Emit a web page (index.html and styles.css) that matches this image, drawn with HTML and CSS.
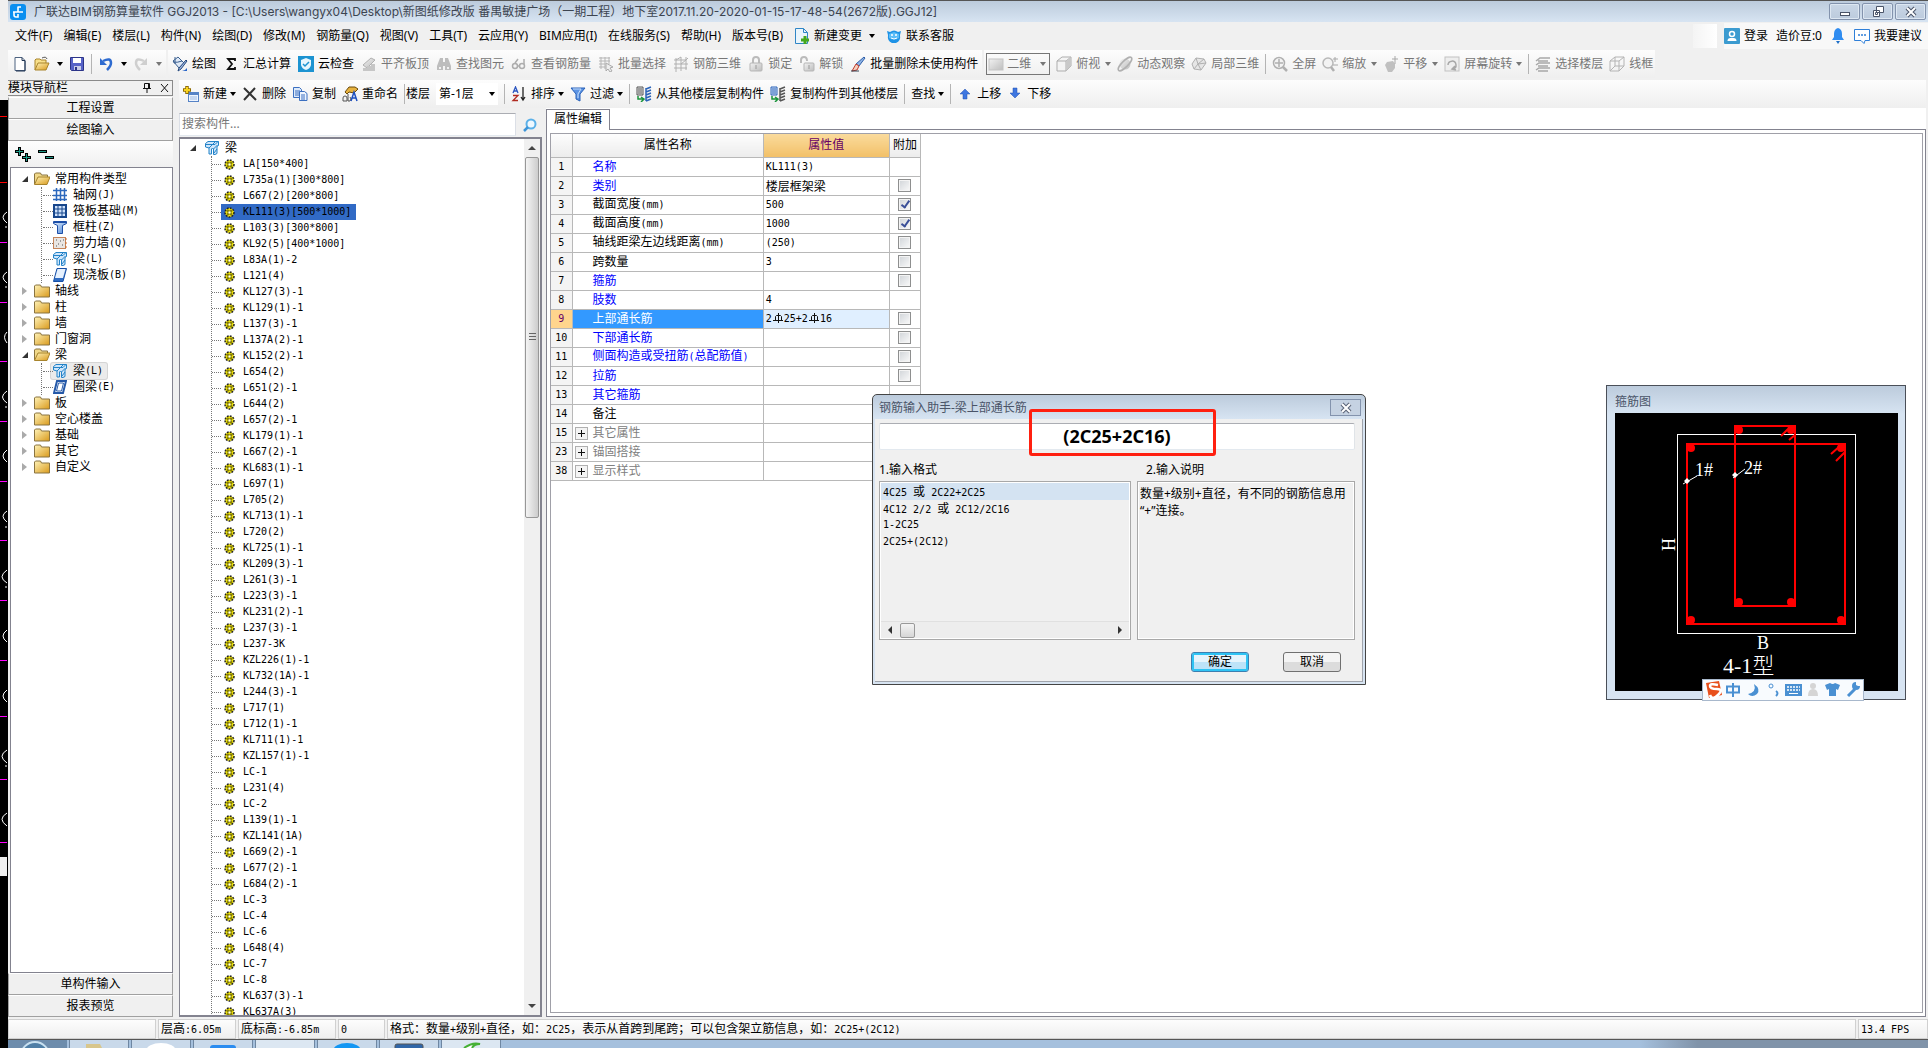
FILE: index.html
```html
<!DOCTYPE html>
<html lang="zh-CN">
<head>
<meta charset="utf-8">
<meta name="viewport" content="width=device-width, initial-scale=1.0">
<title>广联达BIM钢筋算量软件 GGJ2013</title>
<link rel="stylesheet" href="styles.css">
</head>
<body>
<!-- icon sprite -->
<svg class="sprite" aria-hidden="true">
  <defs>
    <linearGradient id="gold" x1="0" y1="0" x2="1" y2="1"><stop offset="0" stop-color="#fff3b8"/><stop offset="1" stop-color="#d99a1c"/></linearGradient>
    <linearGradient id="blue" x1="0" y1="0" x2="1" y2="1"><stop offset="0" stop-color="#e8f2ff"/><stop offset="1" stop-color="#4a86d8"/></linearGradient>
    <linearGradient id="gray" x1="0" y1="0" x2="1" y2="1"><stop offset="0" stop-color="#f2f2f2"/><stop offset="1" stop-color="#bdbdbd"/></linearGradient>
  </defs>
  <symbol id="app" viewBox="0 0 16 16"><rect width="16" height="16" rx="3" fill="#0a8ff0"/><path d="M8 2.500v5.500M8 3h3M3 8h10M4 8v3q0 2 2 2h2V10" fill="none" stroke="#fff" stroke-width="1.600"/></symbol>
  <symbol id="new" viewBox="0 0 16 16"><path d="M3 1.500h7l3 3v10H3z" fill="#fff" stroke="#4c6280"/><path d="M10 1.500v3h3M13 5v10H4" fill="none" stroke="#1f3350"/></symbol>
  <symbol id="open" viewBox="0 0 16 16"><path d="M1 14V4l1-1h4l1 1h5v3" fill="#f8e08a" stroke="#a8842c"/><path d="M1 14l3-7h11l-3 7z" fill="url(#gold)" stroke="#a8842c"/><path d="M8 2q4-2 5 1" fill="none" stroke="#555"/></symbol>
  <symbol id="save" viewBox="0 0 16 16"><path d="M1.500 1.500h13v13h-12l-1-1z" fill="#5763c8" stroke="#2c3488"/><path d="M4 2h8v5H4z" fill="#fff"/><path d="M5 10h7v4H5z" fill="#c9cde8"/><path d="M6 11h2v3H6z" fill="#2c3488"/></symbol>
  <symbol id="undo" viewBox="0 0 16 16"><path d="M5 5q8-4 8 2 0 3-4 7" fill="none" stroke="#2e6bd0" stroke-width="2.500"/><path d="M2 2v7h7z" fill="#2e6bd0"/></symbol>
  <symbol id="redo" viewBox="0 0 16 16"><path d="M11 5Q3 1 3 7q0 3 4 7" fill="none" stroke="#cfcfcf" stroke-width="2.500"/><path d="M14 2v7H7z" fill="#cfcfcf"/></symbol>
  <symbol id="draw" viewBox="0 0 16 16"><path d="M1 5l5-4 6 6-5 5z" fill="#dfe9f6" stroke="#3a5f8f"/><path d="M3 1v7M1 6q4 1 9-1" fill="none" stroke="#3a5f8f"/><path d="M14 4l1 1-6 8-3 2 1-3z" fill="#9fb8df" stroke="#26487c"/><path d="M10 15q3 0 5-3v3z" fill="#2a66c8"/></symbol>
  <symbol id="sigma" viewBox="0 0 16 16"><path d="M12 5V3H5l4 5-4 5h7v-2" fill="none" stroke="#111" stroke-width="1.800"/></symbol>
  <symbol id="cloud" viewBox="0 0 16 16"><rect width="16" height="16" fill="#1c93d1"/><path d="M3 4l5-2 5 2v5q-1 4-5 5-4-1-5-5z" fill="#e8f6fd"/><path d="M5 8l2 2 4-4" fill="none" stroke="#1c93d1" stroke-width="1.500"/></symbol>
  <symbol id="slab" viewBox="0 0 16 16"><path d="M2 9l8-7 4 2-8 8z" fill="url(#gray)" stroke="#b0b0b0"/><path d="M2 12h4v3H2zM6 10h4v5H6zM10 8h4v7h-4z" fill="#c6c6c6"/></symbol>
  <symbol id="binoc" viewBox="0 0 16 16"><path d="M4 2h3v4h2V2h3l3 8v4H9v-4H7v4H1v-4z" fill="#bdbdbd"/><path d="M3 11h2v2H3zM11 11h2v2h-2z" fill="#f1f1f1"/></symbol>
  <symbol id="glasses" viewBox="0 0 16 16"><g fill="none" stroke="#adadad" stroke-width="1.500"><circle cx="4" cy="10" r="2.500"/><circle cx="11" cy="10" r="2.500"/><path d="M6.500 10h2M4 7l3-4M13 8V3"/></g></symbol>
  <symbol id="batch" viewBox="0 0 16 16"><path d="M1 2h11M1 5h11M1 8h6M3 1v12M7 1v12M11 1v7M1 11h6" stroke="#b5b5b5" fill="none"/><path d="M8 7l7 4-3 1 2 3-2 1-2-3-2 2z" fill="#eee" stroke="#aaa"/></symbol>
  <symbol id="grid3" viewBox="0 0 16 16"><path d="M1 4h12l2-2M1 8h14M1 12h13M3 2v14M8 1v14M13 1v13M3 4l5-3M8 8l5-4" stroke="#b0b0b0" fill="none"/></symbol>
  <symbol id="lock" viewBox="0 0 16 16"><path d="M5 7V4q0-3 3-3t3 3v3" fill="none" stroke="#bbb" stroke-width="2"/><rect x="2" y="7" width="12" height="8" rx="1" fill="url(#gray)" stroke="#b5b5b5"/><path d="M8 9v4" stroke="#999"/></symbol>
  <symbol id="unlock" viewBox="0 0 16 16"><path d="M2 7V4q0-3 3-3t3 4" fill="none" stroke="#bbb" stroke-width="2"/><rect x="5" y="7" width="10" height="8" rx="1" fill="url(#gray)" stroke="#b5b5b5"/><path d="M10 9v4" stroke="#999"/></symbol>
  <symbol id="brush" viewBox="0 0 16 16"><path d="M14 1l1 1-6 8-3-2z" fill="#8eb4e6" stroke="#2f5fa8"/><path d="M6 8l3 2-2 4-5 1z" fill="#f3d0c0" stroke="#c0392b"/><path d="M1 15h8" stroke="#345"/></symbol>
  <symbol id="flat" viewBox="0 0 16 16"><rect x="1" y="3" width="14" height="11" fill="url(#gray)" stroke="#c4c4c4"/></symbol>
  <symbol id="cube" viewBox="0 0 16 16"><path d="M1 5l5-4h9v9l-5 5H1z" fill="#f4f4f4" stroke="#adadad"/><path d="M1 5h9v10M10 5l5-4" fill="none" stroke="#adadad"/><path d="M10 5l5-4v9l-5 5z" fill="#c9c9c9"/></symbol>
  <symbol id="orbit" viewBox="0 0 16 16"><circle cx="8" cy="8" r="5.500" fill="url(#gray)"/><ellipse cx="8" cy="8" rx="9" ry="3" transform="rotate(-45 8 8)" fill="none" stroke="#b0b0b0" stroke-width="1.500"/></symbol>
  <symbol id="part3" viewBox="0 0 16 16"><path d="M1 8l4-6 8 1 2 4-5 7-7-1z" fill="#e6e6e6" stroke="#b0b0b0"/><path d="M5 2l2 6-4 5M7 8l8-1M7 8l3 6M13 3L7 8" fill="none" stroke="#b0b0b0"/></symbol>
  <symbol id="full" viewBox="0 0 16 16"><circle cx="7" cy="7" r="5.500" fill="#f3f3f3" stroke="#b0b0b0" stroke-width="1.500"/><path d="M7 3v8M3 7h8" stroke="#b0b0b0" stroke-width="1.500"/><path d="M11 11l4 4" stroke="#b0b0b0" stroke-width="2.500"/></symbol>
  <symbol id="zoom" viewBox="0 0 16 16"><circle cx="6" cy="7" r="5" fill="#f3f3f3" stroke="#b8b8b8" stroke-width="1.500"/><path d="M9 11l3 4" stroke="#b0b0b0" stroke-width="2.500"/><path d="M13 1v5M11 3h5M11 9h5" stroke="#a8a8a8"/></symbol>
  <symbol id="pan" viewBox="0 0 16 16"><path d="M2 9l2-3 6-1 2 3v4l-3 4H5z" fill="#c0c0c0"/><path d="M12 0v8M9 3h6" stroke="#a8a8a8"/></symbol>
  <symbol id="rotate" viewBox="0 0 16 16"><rect x="1" y="1" width="14" height="14" fill="#eee" stroke="#c2c2c2"/><path d="M4 9a4 4 0 1 1 5 4M12 14l-4-1 3-3" fill="none" stroke="#a8a8a8" stroke-width="1.500"/></symbol>
  <symbol id="floors" viewBox="0 0 16 16"><path d="M1 5l4-3h10M3 5h10M1 9l3-2h11M3 10h10M1 14l3-2h11M3 15h10" fill="none" stroke="#a8a8a8" stroke-width="1.500"/></symbol>
  <symbol id="wire" viewBox="0 0 16 16"><path d="M1 5l5-4h9v9l-5 5H1zM1 5h9v10M10 5l5-4M6 1v9h9M6 10l-5 5" fill="none" stroke="#b4b4b4"/></symbol>
  <symbol id="docplus" viewBox="0 0 16 16"><path d="M1.500.500h8l4 4v11h-12z" fill="#eaf5fc" stroke="#2f86c6"/><path d="M9.500.500v4h4" fill="none" stroke="#2f86c6"/><path d="M11 8v8M7 12h8" stroke="#45a81c" stroke-width="3"/></symbol>
  <symbol id="robot" viewBox="0 0 16 16"><path d="M1 3l3 1q4-3 8 0l3-1-1 4q1 6-4 8H6Q1 13 2 7z" fill="#1f93e6"/><path d="M3 6l5-2 5 2v4q-5 3-10 0z" fill="#5bbcf7"/><circle cx="6" cy="7" r="1" fill="#fff"/><circle cx="10" cy="7" r="1" fill="#fff"/><path d="M5 10q3 2 6 0" stroke="#fff" fill="none"/></symbol>
  <symbol id="user" viewBox="0 0 16 16"><rect width="16" height="16" rx="1" fill="#3b9bd0"/><circle cx="8" cy="6" r="2.500" fill="none" stroke="#fff" stroke-width="1.500"/><path d="M3.500 13q0-3 3-3h3q3 0 3 3z" fill="#fff"/></symbol>
  <symbol id="bell" viewBox="0 0 16 16"><path d="M8 0q-4 1-4 6v3l-2 3h12l-2-3V6q0-5-4-6z" fill="#2f8cf0"/><path d="M6 13h4l-2 3z" fill="#1d6fc8"/></symbol>
  <symbol id="chat" viewBox="0 0 16 16"><path d="M.500 1.500h15v11H11l-1 3-3-3H.500z" fill="#fff" stroke="#2f7fd8"/><path d="M4 7h2M7 7h2M10 7h2" stroke="#2f7fd8" stroke-width="1.500"/></symbol>
  <symbol id="newitem" viewBox="0 0 16 16"><rect x="5.500" y="6.500" width="10" height="9" fill="#eef5ff" stroke="#5683c6"/><path d="M6 8h9" stroke="#5683c6" stroke-width="2"/><path d="M7 11h7M7 13h7" stroke="#9db9e2"/><path d="M4 0v8M0 4h8" stroke="#8f6b00" stroke-width="3.500"/><path d="M4 1v6M1 4h6" stroke="#f7d21e" stroke-width="2"/></symbol>
  <symbol id="cross" viewBox="0 0 16 16"><path d="M2 2l12 12M13 2L2 14" stroke="#333" stroke-width="2" fill="none"/></symbol>
  <symbol id="copy" viewBox="0 0 16 16"><path d="M1.500 1.500h6l2 2v8h-8z" fill="#dce9fa" stroke="#3b6fc0"/><path d="M3 5h5M3 7h5M3 9h5" stroke="#3b6fc0"/><path d="M7.500 5.500h5l2.500 2v7H7.500z" fill="#eef5ff" stroke="#3b6fc0"/><path d="M9 9h4M9 11h4M9 13h4" stroke="#3b6fc0"/></symbol>
  <symbol id="rename" viewBox="0 0 16 16"><path d="M3 6l4-5h6l3 2-4 4-5-1-2 2z" fill="#e7b23d" stroke="#6b4a0c"/><path d="M1 15v-3q0-2 2-2t2 2v3zM6 8v7h2q2-2 0-4" fill="none" stroke="#555"/><path d="M9 15l3-9 3 9M10 12h4" fill="none" stroke="#1c4fc0" stroke-width="1.500"/></symbol>
  <symbol id="sort" viewBox="0 0 16 16"><path d="M2 7l2.500-6L7 7M3 5h3" fill="none" stroke="#2a55c0" stroke-width="1.300"/><path d="M2 9.500h5l-5 5h5" fill="none" stroke="#b02a20" stroke-width="1.300"/><path d="M12 1v12M10 11l2 3 2-3" fill="none" stroke="#222" stroke-width="1.300"/></symbol>
  <symbol id="filter" viewBox="0 0 16 16"><path d="M1 2h14L10 8v7l-4-2V8z" fill="#5c94e4" stroke="#2860b8"/><path d="M3 3h8L8 8v4" fill="none" stroke="#c4dcfa"/></symbol>
  <symbol id="fromfloor" viewBox="0 0 16 16"><path d="M1 1h6v8H1z" fill="#e8e8e8" stroke="#555"/><path d="M2 3h4M2 5h4M2 7h4" stroke="#555"/><path d="M2 10v3h5M5 11l3 2-3 3" fill="none" stroke="#19943a" stroke-width="1.500"/><path d="M10 3l5-2M10 6l5-2M10 9l5-2M10 12l5-2M10 15l5-2M10 2v13" stroke="#2a63b8" stroke-width="1.500"/></symbol>
  <symbol id="tofloor" viewBox="0 0 16 16"><path d="M1 1h6v8H1z" fill="#cfe0f8" stroke="#2a63b8"/><path d="M2 3h4M2 5h4M2 7h4" stroke="#2a63b8"/><path d="M2 10v3h5M5 11l3 2-3 3" fill="none" stroke="#19943a" stroke-width="1.500"/><path d="M10 3l5-2M10 6l5-2M10 9l5-2M10 12l5-2M10 15l5-2M10 2v13" stroke="#555" stroke-width="1.500"/></symbol>
  <symbol id="up" viewBox="0 0 16 16"><path d="M8 3l5 5h-3v5H6V8H3z" fill="#3e76e0" stroke="#2250b0" stroke-width=".500"/></symbol>
  <symbol id="down" viewBox="0 0 16 16"><path d="M8 12l5-5h-3V2H6v5H3z" fill="#3e76e0" stroke="#2250b0" stroke-width=".500"/></symbol>
  <symbol id="mag" viewBox="0 0 16 16"><circle cx="9" cy="7" r="4.500" fill="#eef8ff" stroke="#5bb0e8" stroke-width="2"/><path d="M6 10l-4 4" stroke="#3d95d8" stroke-width="2.500"/></symbol>
  <symbol id="folder" viewBox="0 0 16 14"><path d="M.500 12V2l1-1h5l1 2h8v10H.500z" fill="url(#gold)" stroke="#8a7440"/></symbol>
  <symbol id="folder-open" viewBox="0 0 16 14"><path d="M.500 12V2l1-1h5l1 2h6v2" fill="#f1d98a" stroke="#8a7440"/><path d="M.500 12.500L4 5h12l-3 7.500z" fill="url(#gold)" stroke="#a8842c"/></symbol>
  <symbol id="axis" viewBox="0 0 14 14"><path d="M0 2.500h14M0 7.500h14M0 11.500h14M3.500 0v13M7.500 0v13M11.500 0v13" stroke="#2c68bd" fill="none" stroke-width="1.500"/></symbol>
  <symbol id="raft" viewBox="0 0 14 14"><path d="M1 1h12v12H1z" fill="#cfe2fb" stroke="#17468c" stroke-width="2"/><path d="M1 5h12M1 9h12M5 1v12M9 1v12" stroke="#17468c"/></symbol>
  <symbol id="column" viewBox="0 0 14 14"><path d="M.500 1.500h13v2l-4 2v8h-5v-8l-4-2z" fill="url(#blue)" stroke="#1d4fa8"/><path d="M1 2h12" stroke="#1d4fa8" stroke-width="2"/></symbol>
  <symbol id="wall" viewBox="0 0 14 14"><rect x=".500" y="1.500" width="12" height="11" fill="#e9e6e3" stroke="#c4855b"/><path d="M3 4h1M7 5h1M5 8h1M9 9h1M3 10h1M10 4h1" stroke="#555"/><path d="M12 3h2M12 7h2M12 11h2" stroke="#d06a2b"/></symbol>
  <symbol id="beam" viewBox="0 0 14 14"><path d="M.500 2.500L3 .500h10.500v4l-1.500 1v7l-2 1H8.500V8l-1-1-1 1v5H4V7L.500 6z" fill="#cfe6fb" stroke="#2383c8"/><path d="M1 3.500h9l3-3M4 7l6-6M8.500 8l4-4M9 12l3-4" fill="none" stroke="#2383c8"/></symbol>
  <symbol id="plate" viewBox="0 0 14 14"><path d="M4 .500h9.500L10 13.500H.500z" fill="#2f6cc4" stroke="#174fa5"/><path d="M4.500 1h8l-2.500 9H2z" fill="#e6f1fe"/></symbol>
  <symbol id="ring" viewBox="0 0 14 14"><path d="M4 1h9l-3 12H1z" fill="#fff" stroke="#2458a8" stroke-width="2"/><path d="M5.500 3h5l-2 8h-5z" fill="#fff" stroke="#2458a8"/></symbol>
  <symbol id="gear" viewBox="0 0 11 11"><circle cx="5.500" cy="5.500" r="4.500" fill="#f4e80c" stroke="#222" stroke-width="1.500" stroke-dasharray="1.800 1.200"/><path d="M4 2.500v6M7 2.500v6M2.500 4h6M2.500 7h6" stroke="#3a3800" stroke-width=".700"/><rect x="4.500" y="4.500" width="2" height="2" fill="#fff"/></symbol>
  <symbol id="rebar" viewBox="0 0 10 11"><path d="M5.500 0v10M2.500 7.500v-4l1-1h4l1 1v4M0 7.500h10" fill="none" stroke="#111"/></symbol>
</svg>

<div class="strip" aria-hidden="true">
  <svg width="8" height="948" viewBox="0 0 8 948">
    <rect width="8" height="948" fill="#000"/>
    <path d="M0 16.500h7M0 82.500h7" stroke="#f00"/>
    <path d="M0 142.500h7M0 202.500h7M0 261.500h7M0 321.500h7M0 381.500h7M0 440.500h7M0 500.500h7M0 560.500h7M0 616.500h7M0 679.500h7M0 742.500h7" stroke="#f0f"/>
    <path d="M7 112q-8 5 0 11M7 172q-8 5 0 11M7 232q-5 5 0 11M7 291q-9 6 0 12M7 350q-8 6 0 12M7 411q-8 5 0 11M7 470q-10 7 0 13M7 530q-8 6 0 12M7 590q-8 6 0 12M7 650q-10 6 0 13M7 713q-10 6 0 13M5 127h2M5 187h2M5 307h2M5 427h2M5 487h2M5 666h2" fill="none" stroke="#fff"/>
    <path d="M0 757h7v19H0z" fill="#f0f0f0"/>
  </svg>
</div>

<div class="app">
  <header class="titlebar">
    <svg class="icon"><use href="#app"/></svg>
    <h1>广联达BIM钢筋算量软件 GGJ2013 - [C:\Users\wangyx04\Desktop\新图纸修改版 番禺敏捷广场（一期工程）地下室2017.11.20-2020-01-15-17-48-54(2672版).GGJ12]</h1>
    <div class="winbtns">
      <button aria-label="最小化"><svg width="14" height="14"><rect x="2.500" y="7.500" width="9" height="3" fill="#fff" stroke="#4a5468"/></svg></button>
      <button aria-label="还原"><svg width="14" height="14"><path d="M5.500 1.500h7v6h-7zM2.500 5.500h6v6h-6z" fill="#fff" stroke="#4a5468"/><path d="M4.500 7.500h2v2h-2z" fill="#fff" stroke="#4a5468"/></svg></button>
      <button aria-label="关闭"><svg width="14" height="14"><path d="M3 3l8 8M11 3l-8 8" stroke="#4a5468" stroke-width="4"/><path d="M3 3l8 8M11 3l-8 8" stroke="#fff" stroke-width="2"/></svg></button>
    </div>
  </header>

  <nav class="menubar">
    <button>文件(F)</button><button>编辑(E)</button><button>楼层(L)</button><button>构件(N)</button><button>绘图(D)</button><button>修改(M)</button><button>钢筋量(Q)</button><button>视图(V)</button><button>工具(T)</button><button>云应用(Y)</button><button>BIM应用(I)</button><button>在线服务(S)</button><button>帮助(H)</button><button>版本号(B)</button>
    <button class="tool"><svg class="icon"><use href="#docplus"/></svg>新建变更<i class="caret far"></i></button>
    <button class="tool"><svg class="icon"><use href="#robot"/></svg>联系客服</button>
    <span class="blank"></span>
    <div class="account">
      <button class="tool"><svg class="icon"><use href="#user"/></svg>登录</button>
      <button>造价豆:0</button>
      <button class="tool" aria-label="消息"><svg class="icon"><use href="#bell"/></svg></button>
      <button class="tool"><svg class="icon"><use href="#chat"/></svg>我要建议</button>
    </div>
  </nav>

  <div class="toolrow">
    <div class="toolbar files">
      <button aria-label="新建"><svg class="icon"><use href="#new"/></svg></button>
      <button class="tool" aria-label="打开"><svg class="icon"><use href="#open"/></svg><i class="caret far"></i></button>
      <button aria-label="保存"><svg class="icon"><use href="#save"/></svg></button>
      <i class="sep"></i>
      <button class="tool" aria-label="撤销"><svg class="icon"><use href="#undo"/></svg><i class="caret far"></i></button>
      <button class="tool dim" aria-label="恢复"><svg class="icon"><use href="#redo"/></svg><i class="caret far"></i></button>
    </div>
    <div class="toolbar">
      <button class="tool"><svg class="icon"><use href="#draw"/></svg>绘图</button>
      <button class="tool"><svg class="icon"><use href="#sigma"/></svg>汇总计算</button>
      <button class="tool"><svg class="icon"><use href="#cloud"/></svg>云检查</button>
      <button class="tool dim"><svg class="icon"><use href="#slab"/></svg>平齐板顶</button>
      <button class="tool dim"><svg class="icon"><use href="#binoc"/></svg>查找图元</button>
      <button class="tool dim"><svg class="icon"><use href="#glasses"/></svg>查看钢筋量</button>
      <button class="tool dim"><svg class="icon"><use href="#batch"/></svg>批量选择</button>
      <button class="tool dim"><svg class="icon"><use href="#grid3"/></svg>钢筋三维</button>
      <button class="tool dim"><svg class="icon"><use href="#lock"/></svg>锁定</button>
      <button class="tool dim"><svg class="icon"><use href="#unlock"/></svg>解锁</button>
      <button class="tool"><svg class="icon"><use href="#brush"/></svg>批量删除未使用构件</button>
    </div>
    <div class="toolbar view">
      <label class="drop framed dim"><svg class="icon"><use href="#flat"/></svg><select aria-label="视图模式"><option>二维</option><option>三维</option></select><i class="caret"></i></label>
      <button class="tool dim"><svg class="icon"><use href="#cube"/></svg>俯视<i class="caret far"></i></button>
      <button class="tool dim"><svg class="icon"><use href="#orbit"/></svg>动态观察</button>
      <button class="tool dim"><svg class="icon"><use href="#part3"/></svg>局部三维</button>
      <i class="sep"></i>
      <button class="tool dim"><svg class="icon"><use href="#full"/></svg>全屏</button>
      <button class="tool dim"><svg class="icon"><use href="#zoom"/></svg>缩放<i class="caret far"></i></button>
      <button class="tool dim"><svg class="icon"><use href="#pan"/></svg>平移<i class="caret far"></i></button>
      <button class="tool dim"><svg class="icon"><use href="#rotate"/></svg>屏幕旋转<i class="caret"></i></button>
      <i class="sep"></i>
      <button class="tool dim"><svg class="icon"><use href="#floors"/></svg>选择楼层</button>
      <button class="tool dim"><svg class="icon"><use href="#wire"/></svg>线框</button>
    </div>
  </div>

  <main class="main">
    <aside class="nav">
      <div class="nav-head">模块导航栏
        <span class="nav-ctl">
          <button aria-label="固定"><svg width="10" height="12"><path d="M2.500 1.500h5v5h-5zM6.500 1v6M1 6.500h8M5 7v4" fill="none" stroke="#111"/></svg></button>
          <button aria-label="关闭"><svg width="9" height="12"><path d="M1 2l7 8M8 2L1 10" stroke="#111" fill="none"/></svg></button>
        </span>
      </div>
      <button class="bar">工程设置</button>
      <button class="bar">绘图输入</button>
      <div class="nav-tools">
        <button aria-label="全部展开"><svg width="17" height="15"><path d="M4.500 0v9M0 4.500h9M11.500 6v9M7 10.500h9" stroke="#000" stroke-width="3"/><path d="M4.500 1v7M1 4.500h7M11.500 7v7M8 10.500h7" stroke="#1f9a88"/></svg></button>
        <button aria-label="全部折叠"><svg width="17" height="15"><path d="M0 4.500h9M7 10.500h9" stroke="#000" stroke-width="3"/><path d="M1 4.500h7M8 10.500h7" stroke="#1f9a88"/></svg></button>
      </div>
      <ul class="tree">
        <li class="open"><span><svg class="fold"><use href="#folder-open"/></svg>常用构件类型</span>
          <ul>
            <li><span><svg><use href="#axis"/></svg>轴网<b>(J)</b></span></li>
            <li><span><svg><use href="#raft"/></svg>筏板基础<b>(M)</b></span></li>
            <li><span><svg><use href="#column"/></svg>框柱<b>(Z)</b></span></li>
            <li><span><svg><use href="#wall"/></svg>剪力墙<b>(Q)</b></span></li>
            <li><span><svg><use href="#beam"/></svg>梁<b>(L)</b></span></li>
            <li><span><svg><use href="#plate"/></svg>现浇板<b>(B)</b></span></li>
          </ul>
        </li>
        <li><span><svg class="fold"><use href="#folder"/></svg>轴线</span></li>
        <li><span><svg class="fold"><use href="#folder"/></svg>柱</span></li>
        <li><span><svg class="fold"><use href="#folder"/></svg>墙</span></li>
        <li><span><svg class="fold"><use href="#folder"/></svg>门窗洞</span></li>
        <li class="open"><span><svg class="fold"><use href="#folder-open"/></svg>梁</span>
          <ul>
            <li class="current"><span><svg><use href="#beam"/></svg>梁<b>(L)</b></span></li>
            <li><span><svg><use href="#ring"/></svg>圈梁<b>(E)</b></span></li>
          </ul>
        </li>
        <li><span><svg class="fold"><use href="#folder"/></svg>板</span></li>
        <li><span><svg class="fold"><use href="#folder"/></svg>空心楼盖</span></li>
        <li><span><svg class="fold"><use href="#folder"/></svg>基础</span></li>
        <li><span><svg class="fold"><use href="#folder"/></svg>其它</span></li>
        <li><span><svg class="fold"><use href="#folder"/></svg>自定义</span></li>
      </ul>
      <button class="bar">单构件输入</button>
      <button class="bar">报表预览</button>
    </aside>

    <div class="work">
      <div class="toolbar second">
        <button class="tool"><svg class="icon"><use href="#newitem"/></svg>新建<i class="caret"></i></button>
        <button class="tool"><svg class="icon"><use href="#cross"/></svg>删除</button>
        <button class="tool"><svg class="icon"><use href="#copy"/></svg>复制</button>
        <button class="tool"><svg class="icon"><use href="#rename"/></svg>重命名</button>
        <i class="sep"></i>
        <label class="floor" for="floor">楼层</label>
        <span class="drop"><select id="floor"><option>第-1层</option><option>首层</option></select><i class="caret"></i></span>
        <i class="sep"></i>
        <button class="tool"><svg class="icon"><use href="#sort"/></svg>排序<i class="caret"></i></button>
        <button class="tool"><svg class="icon"><use href="#filter"/></svg>过滤<i class="caret"></i></button>
        <i class="sep"></i>
        <button class="tool"><svg class="icon"><use href="#fromfloor"/></svg>从其他楼层复制构件</button>
        <button class="tool"><svg class="icon"><use href="#tofloor"/></svg>复制构件到其他楼层</button>
        <i class="sep"></i>
        <button class="tool">查找<i class="caret"></i></button>
        <i class="sep"></i>
        <button class="tool"><svg class="icon"><use href="#up"/></svg>上移</button>
        <button class="tool"><svg class="icon"><use href="#down"/></svg>下移</button>
      </div>

      <div class="panes">
        <section class="parts">
          <div class="search">
            <input type="text" placeholder="搜索构件..." aria-label="搜索构件">
            <button aria-label="搜索"><svg class="icon"><use href="#mag"/></svg></button>
          </div>
          <div class="list">
            <div class="list-body">
              <div class="root"><svg><use href="#beam"/></svg>梁</div>
              <ul>
                <li><svg><use href="#gear"/></svg>LA[150*400]</li>
                <li><svg><use href="#gear"/></svg>L735a(1)[300*800]</li>
                <li><svg><use href="#gear"/></svg>L667(2)[200*800]</li>
                <li class="sel"><svg><use href="#gear"/></svg>KL111(3)[500*1000]</li>
                <li><svg><use href="#gear"/></svg>L103(3)[300*800]</li>
                <li><svg><use href="#gear"/></svg>KL92(5)[400*1000]</li>
                <li><svg><use href="#gear"/></svg>L83A(1)-2</li>
                <li><svg><use href="#gear"/></svg>L121(4)</li>
                <li><svg><use href="#gear"/></svg>KL127(3)-1</li>
                <li><svg><use href="#gear"/></svg>KL129(1)-1</li>
                <li><svg><use href="#gear"/></svg>L137(3)-1</li>
                <li><svg><use href="#gear"/></svg>L137A(2)-1</li>
                <li><svg><use href="#gear"/></svg>KL152(2)-1</li>
                <li><svg><use href="#gear"/></svg>L654(2)</li>
                <li><svg><use href="#gear"/></svg>L651(2)-1</li>
                <li><svg><use href="#gear"/></svg>L644(2)</li>
                <li><svg><use href="#gear"/></svg>L657(2)-1</li>
                <li><svg><use href="#gear"/></svg>KL179(1)-1</li>
                <li><svg><use href="#gear"/></svg>L667(2)-1</li>
                <li><svg><use href="#gear"/></svg>KL683(1)-1</li>
                <li><svg><use href="#gear"/></svg>L697(1)</li>
                <li><svg><use href="#gear"/></svg>L705(2)</li>
                <li><svg><use href="#gear"/></svg>KL713(1)-1</li>
                <li><svg><use href="#gear"/></svg>L720(2)</li>
                <li><svg><use href="#gear"/></svg>KL725(1)-1</li>
                <li><svg><use href="#gear"/></svg>KL209(3)-1</li>
                <li><svg><use href="#gear"/></svg>L261(3)-1</li>
                <li><svg><use href="#gear"/></svg>L223(3)-1</li>
                <li><svg><use href="#gear"/></svg>KL231(2)-1</li>
                <li><svg><use href="#gear"/></svg>L237(3)-1</li>
                <li><svg><use href="#gear"/></svg>L237-3K</li>
                <li><svg><use href="#gear"/></svg>KZL226(1)-1</li>
                <li><svg><use href="#gear"/></svg>KL732(1A)-1</li>
                <li><svg><use href="#gear"/></svg>L244(3)-1</li>
                <li><svg><use href="#gear"/></svg>L717(1)</li>
                <li><svg><use href="#gear"/></svg>L712(1)-1</li>
                <li><svg><use href="#gear"/></svg>KL711(1)-1</li>
                <li><svg><use href="#gear"/></svg>KZL157(1)-1</li>
                <li><svg><use href="#gear"/></svg>LC-1</li>
                <li><svg><use href="#gear"/></svg>L231(4)</li>
                <li><svg><use href="#gear"/></svg>LC-2</li>
                <li><svg><use href="#gear"/></svg>L139(1)-1</li>
                <li><svg><use href="#gear"/></svg>KZL141(1A)</li>
                <li><svg><use href="#gear"/></svg>L669(2)-1</li>
                <li><svg><use href="#gear"/></svg>L677(2)-1</li>
                <li><svg><use href="#gear"/></svg>L684(2)-1</li>
                <li><svg><use href="#gear"/></svg>LC-3</li>
                <li><svg><use href="#gear"/></svg>LC-4</li>
                <li><svg><use href="#gear"/></svg>LC-6</li>
                <li><svg><use href="#gear"/></svg>L648(4)</li>
                <li><svg><use href="#gear"/></svg>LC-7</li>
                <li><svg><use href="#gear"/></svg>LC-8</li>
                <li><svg><use href="#gear"/></svg>KL637(3)-1</li>
                <li><svg><use href="#gear"/></svg>KL637A(3)</li>
              </ul>
            </div>
            <div class="vscroll"><i class="tri up"></i><div class="track"><div class="thumb"></div></div><i class="tri down"></i></div>
          </div>
        </section>

        <section class="props">
          <div class="tabs"><button class="tab">属性编辑</button></div>
          <div class="sheet">
            <div class="inner">
              <table>
                <colgroup><col class="c-no"><col class="c-name"><col class="c-val"><col class="c-add"></colgroup>
                <thead><tr><th></th><th>属性名称</th><th class="hot">属性值</th><th>附加</th></tr></thead>
                <tbody>
                  <tr><th>1</th><td class="blue">名称</td><td class="val">KL111(3)</td><td></td></tr>
                  <tr><th>2</th><td class="blue">类别</td><td class="val cn">楼层框架梁</td><td><input type="checkbox" aria-label="类别"></td></tr>
                  <tr><th>3</th><td>截面宽度<b>(mm)</b></td><td class="val">500</td><td><input type="checkbox" aria-label="截面宽度" checked></td></tr>
                  <tr><th>4</th><td>截面高度<b>(mm)</b></td><td class="val">1000</td><td><input type="checkbox" aria-label="截面高度" checked></td></tr>
                  <tr><th>5</th><td>轴线距梁左边线距离<b>(mm)</b></td><td class="val">(250)</td><td><input type="checkbox" aria-label="轴线距梁左边线距离"></td></tr>
                  <tr><th>6</th><td>跨数量</td><td class="val">3</td><td><input type="checkbox" aria-label="跨数量"></td></tr>
                  <tr><th>7</th><td class="blue">箍筋</td><td class="val"></td><td><input type="checkbox" aria-label="箍筋"></td></tr>
                  <tr><th>8</th><td class="blue">肢数</td><td class="val">4</td><td></td></tr>
                  <tr class="active"><th>9</th><td>上部通长筋</td><td class="val">2<svg class="rebar"><use href="#rebar"/></svg>25+2<svg class="rebar"><use href="#rebar"/></svg>16</td><td><input type="checkbox" aria-label="上部通长筋"></td></tr>
                  <tr><th>10</th><td class="blue">下部通长筋</td><td class="val"></td><td><input type="checkbox" aria-label="下部通长筋"></td></tr>
                  <tr><th>11</th><td class="blue">侧面构造或受扭筋<b>(</b>总配筋值<b>)</b></td><td class="val"></td><td><input type="checkbox" aria-label="侧面构造或受扭筋"></td></tr>
                  <tr><th>12</th><td class="blue">拉筋</td><td class="val"></td><td><input type="checkbox" aria-label="拉筋"></td></tr>
                  <tr><th>13</th><td class="blue">其它箍筋</td><td class="val"></td><td></td></tr>
                  <tr><th>14</th><td>备注</td><td class="val"></td><td></td></tr>
                  <tr><th>15</th><td class="group"><button aria-label="展开"></button>其它属性</td><td class="val"></td><td></td></tr>
                  <tr><th>23</th><td class="group"><button aria-label="展开"></button>锚固搭接</td><td class="val"></td><td></td></tr>
                  <tr><th>38</th><td class="group"><button aria-label="展开"></button>显示样式</td><td class="val"></td><td></td></tr>
                </tbody>
              </table>
            </div>
          </div>
        </section>
      </div>
    </div>
  </main>

  <footer class="status">
    <span class="s1"></span><span class="s2">层高<b>:6.05m</b></span><span class="s3">底标高<b>:-6.85m</b></span><span class="s4"><b>0</b></span>
    <span class="s5">格式：数量<b>+</b>级别<b>+</b>直径，如：<b>2C25</b>，表示从首跨到尾跨；可以包含架立筋信息，如：<b>2C25+(2C12)</b></span>
    <span class="s6"><b>13.4 FPS</b></span>
  </footer>
  <div class="taskbar">
    <span class="start"><svg width="30" height="8"><circle cx="15" cy="16" r="14" fill="#4f7ea6" stroke="#c8e0f0" stroke-width="2"/></svg></span>
    <span class="task"><svg width="30" height="8"><path d="M2 8V4h14l2 4z" fill="#d8c68c"/></svg></span>
    <span class="task"><svg width="30" height="8"><ellipse cx="15" cy="11" rx="15" ry="8" fill="#fff"/></svg></span>
    <span class="task"><svg width="30" height="8"><rect x="2" y="5" width="26" height="9" rx="3" fill="#2a8cf0"/></svg></span>
    <span class="task light"></span>
    <span class="task"><svg width="30" height="8"><ellipse cx="15" cy="11" rx="14" ry="8" fill="#1296f3"/></svg></span>
    <span class="task"><svg width="30" height="8"><rect x="1" y="4" width="28" height="9" rx="2" fill="#2f66a8" stroke="#555"/></svg></span>
    <span class="task light"><svg width="30" height="8"><path d="M8 8q8-6 16-4-6 0-8 4" fill="#fff" stroke="#45b035" stroke-width="2"/></svg></span>
  </div>
</div>

<!-- floating windows -->
<div class="dialog" role="dialog" aria-labelledby="dlg-title">
  <div class="dlg-title"><span id="dlg-title">钢筋输入助手-梁上部通长筋</span>
    <button aria-label="关闭"><svg width="14" height="12"><path d="M3 2l8 8M11 2l-8 8" stroke="#5a6478" stroke-width="4"/><path d="M3 2l8 8M11 2l-8 8" stroke="#fff" stroke-width="2"/></svg></button>
  </div>
  <div class="dlg-body">
    <input class="formula" type="text" value="(2C25+2C16)" aria-label="钢筋信息">
    <div class="cols">
      <div class="col-l">
        <h2>1.输入格式</h2>
        <div class="box formats">
          <ul><li class="on">4C25 <i>或</i> 2C22+2C25</li><li>4C12 2/2 <i>或</i> 2C12/2C16</li><li>1-2C25</li><li>2C25+(2C12)</li></ul>
          <div class="hscroll"><i class="tri left"></i><div class="knob"></div><i class="tri right"></i></div>
        </div>
      </div>
      <div class="col-r">
        <h2>2.输入说明</h2>
        <div class="box"><p>数量+级别+直径，有不同的钢筋信息用“+”连接。</p></div>
      </div>
    </div>
    <div class="actions"><button class="ok">确定</button><button>取消</button></div>
  </div>
  <div class="mark"></div>
</div>

<div class="stirrup">
  <div class="st-title">箍筋图</div>
  <svg class="drawing" viewBox="0 0 283 278">
    <rect width="283" height="278" fill="#000"/>
    <rect x="62.500" y="21.500" width="178" height="199" fill="none" stroke="#fff"/>
    <g fill="none" stroke="#f00" stroke-width="2">
      <rect x="72" y="31" width="158" height="180"/>
      <rect x="120" y="13" width="60" height="180"/>
      <path d="M216 41l9-8M221 48l9-9M166 23l7-7M174 27l6-5"/>
    </g>
    <g fill="#f00">
      <circle cx="76" cy="35" r="4"/><circle cx="226" cy="35" r="4"/><circle cx="76" cy="207" r="4"/><circle cx="226" cy="207" r="4"/>
      <circle cx="124" cy="17" r="4"/><circle cx="176" cy="17" r="4"/><circle cx="124" cy="189" r="4"/><circle cx="176" cy="189" r="4"/>
    </g>
    <path d="M68 71l14-8M118 65l12-9" stroke="#fff"/>
    <path d="M72 65l3 3-3 3-3-3zM120 59l3 3-3 3-3-3z" fill="#fff"/>
    <g fill="#fff" class="cad">
      <text x="80" y="63">1#</text><text x="129" y="61">2#</text><text x="142" y="236">B</text>
      <text transform="translate(60 138) rotate(-90)">H</text>
      <text x="108" y="260" class="big">4-1型</text>
    </g>
  </svg>
</div>

<div class="ime">
  <svg width="160" height="20" viewBox="0 0 160 20">
    <path d="M3 3l13-2 3 14-13 3z" fill="#e8501c"/><path d="M15 5q-8-2-8 1t7 3 1 6-8 0" fill="none" stroke="#fff" stroke-width="2.500"/>
    <path d="M24 6.500h12v6H24zM30 3v14" fill="none" stroke="#4a90d2" stroke-width="2"/>
    <path d="M51 4q3 8-6 10 4 4 9 0 4-5-3-10z" fill="#4a90d2"/>
    <circle cx="68" cy="6" r="2" fill="none" stroke="#4a90d2"/><path d="M73 11q3 2 0 5" fill="none" stroke="#4a90d2" stroke-width="2"/>
    <rect x="82" y="4" width="17" height="12" fill="#4a90d2"/><path d="M84 7h13M84 10h13" stroke="#fff" stroke-width="1.500" stroke-dasharray="2 1"/><path d="M86 13.500h9" stroke="#fff"/>
    <circle cx="110" cy="6" r="3" fill="#d5d5d5"/><path d="M105 16q0-7 5-7t5 7z" fill="#d5d5d5"/>
    <path d="M122 5l5-2q3 2 5 0l5 2-2 5-2-1v7h-7V9l-2 1z" fill="#4a90d2"/>
    <path d="M145 16l7-7" stroke="#4a90d2" stroke-width="3"/><path d="M157 6a4 4 0 1 1-4-4v3l2 1z" fill="#4a90d2"/>
  </svg>
</div>
</body>
</html>
```
FILE: styles.css
```css
* {
  margin: 0;
  padding: 0;
  box-sizing: border-box;
}
body {
  position: relative;
  display: flex;
  height: 100vh;
  overflow: hidden;
  background: #f0f0f0;
  color: #000;
  font: 12px/16px "Noto Sans", "Noto Sans CJK SC", sans-serif;
  white-space: nowrap;
}
button, input, select {
  font: inherit;
  color: inherit;
}
button {
  border: 0;
  background: none;
}
ul {
  list-style: none;
}
svg {
  display: block;
  flex: none;
}
i {
  font-style: normal;
}
/* latin runs inside the chinese labels */
b {
  font: 10px/16px "DejaVu Sans Mono", monospace;
}
.sprite {
  position: absolute;
  width: 0;
  height: 0;
}
.icon {
  width: 16px;
  height: 16px;
}
.strip {
  width: 8px;
  padding-top: 100px;
  flex: none;
  overflow: hidden;
}
.app {
  flex: 1;
  min-width: 0;
  display: flex;
  flex-direction: column;
}

/* title bar */
.titlebar {
  height: 22px;
  display: flex;
  align-items: center;
  gap: 8px;
  padding: 0 2px;
  border-top: 1px solid #555;
  background: linear-gradient(#bccbdc, #d7e4f2);
}
.titlebar h1 {
  flex: 1;
  font: 12px/16px Inter, "Noto Sans CJK SC", sans-serif;
  color: #3c4450;
}
.winbtns {
  display: flex;
  gap: 2px;
}
.winbtns button {
  width: 31px;
  height: 17px;
  display: flex;
  align-items: center;
  justify-content: center;
  border: 1px solid #8393ad;
  border-radius: 2px;
  background: linear-gradient(#c9d6e6, #bccbdd);
  box-shadow: inset 0 0 0 1px #dde7f2;
}

/* menu and tool bars */
.menubar {
  height: 28px;
  display: flex;
  align-items: center;
  gap: 11px;
  padding-left: 7px;
}
.tool {
  display: flex;
  align-items: center;
  gap: 4px;
}
.dim {
  color: #777;
}
.blank {
  width: 24px;
  height: 24px;
  margin-left: auto;
  margin-right: -4px;
  background: linear-gradient(90deg, #f4f4f4, #fff);
}
.account {
  height: 26px;
  display: flex;
  align-items: center;
  gap: 8px;
  padding: 0 6px 0 0;
  background: #f8f8f8;
}
.caret {
  width: 0;
  border: 3px solid transparent;
  border-top: 4px solid currentColor;
  border-bottom: 0;
}
.caret.far {
  margin-left: 3px;
}
.sep {
  width: 1px;
  height: 20px;
  background: #b4b4b4;
}
.toolrow {
  height: 28px;
  display: flex;
  gap: 2px;
}
.toolbar {
  display: flex;
  align-items: center;
  gap: 7px;
  padding: 0 4px;
  background: linear-gradient(#fdfdfd, #efefef);
}
.files, .view, .second {
  gap: 6px;
}
.view {
  padding: 0 2px;
}
.drop {
  display: flex;
  align-items: center;
  gap: 4px;
}
.drop select {
  appearance: none;
  border: 0;
  background: none;
  outline: 0;
}
.framed {
  height: 22px;
  padding: 0 3px 0 1px;
  gap: 3px;
  border: 1px solid #777;
}
.framed select {
  width: 30px;
}
.view .caret.far {
  margin-left: 1px;
}

.main {
  flex: 1;
  min-height: 0;
  display: flex;
  gap: 6px;
  padding: 2px 2px 2px 0;
}

/* navigation */
.nav {
  width: 165px;
  display: flex;
  flex-direction: column;
  font-family: "DejaVu Sans Mono", "Noto Sans CJK SC", sans-serif;
}
.nav-head {
  height: 16px;
  display: flex;
  justify-content: space-between;
  align-items: center;
  margin-bottom: 1px;
  border: 1px solid #8a8a8a;
  border-left: 0;
}
.nav-ctl {
  display: flex;
  gap: 8px;
  padding-right: 3px;
}
.bar {
  height: 22px;
  border: 1px solid #a0a0a0;
  border-top-color: #fff;
  background: #f0f0f0;
}
.nav-tools {
  height: 26px;
  display: flex;
  align-items: center;
  gap: 6px;
  padding: 0 7px;
  background: linear-gradient(#fdfdfd, #f0f0f0);
}
.tree {
  flex: 1;
  margin-left: 2px;
  padding: 3px 0 0 10px;
  border: 1px solid #83838f;
  background: #fff;
}
.tree li {
  position: relative;
}
.tree span {
  display: flex;
  align-items: center;
  height: 16px;
  gap: 6px;
  padding-left: 13px;
}
.tree > li > span {
  gap: 5px;
}
.tree svg {
  width: 14px;
  height: 14px;
}
.tree svg.fold {
  width: 16px;
}
.tree b {
  margin-left: -6px;
}
.tree > li::before {
  content: "";
  position: absolute;
  left: 1px;
  top: 4px;
  border: 4px solid transparent;
  border-left: 5px solid #aaa;
  border-right: 0;
}
.tree > li.open::before {
  top: 5px;
  border: 0;
  border-left: 6px solid transparent;
  border-bottom: 6px solid #333;
}
.tree ul {
  margin-left: 20px;
  border-left: 1px dotted #777;
}
.tree ul li::before {
  content: "";
  position: absolute;
  left: 1px;
  top: 8px;
  width: 10px;
  border-top: 1px dotted #777;
}
.tree ul span {
  display: inline-flex;
  padding: 0 4px 0 2px;
  margin-left: 9px;
  vertical-align: top;
}
.tree .current span {
  border-radius: 2px;
  background: #ebebeb;
  box-shadow: 0 0 0 1px #d5d5d5;
}

/* work area */
.work {
  flex: 1;
  min-width: 0;
  display: flex;
  flex-direction: column;
}
.second {
  height: 28px;
}
.second .tool .caret {
  margin-left: -1px;
}
.floor {
  margin-left: -5px;
}
.second .drop {
  height: 22px;
  padding: 0 3px;
  background: #fff;
}
.second .drop select {
  width: 46px;
}
.panes {
  flex: 1;
  min-height: 0;
  display: flex;
  gap: 4px;
}
.parts {
  width: 363px;
  display: flex;
  flex-direction: column;
  padding-top: 4px;
}
.search {
  display: flex;
  align-items: center;
  gap: 6px;
  height: 25px;
}
.search input {
  width: 337px;
  height: 23px;
  padding: 0 2px 2px;
  border: 1px solid #abadb3;
  border-color: #abadb3 #dbdfe6 #e3e9ef;
  outline: 0;
}
.search input::placeholder {
  color: #777;
}
.list {
  flex: 1;
  min-height: 0;
  display: flex;
  border: 1px solid #83838f;
  border-width: 2px 2px 2px 1px;
  background: #fff;
}
.list-body {
  flex: 1;
  overflow: hidden;
}
.list .root {
  position: relative;
  display: flex;
  align-items: center;
  gap: 6px;
  height: 16px;
  margin-top: 1px;
  padding-left: 25px;
}
.root svg {
  width: 14px;
  height: 14px;
}
.root::before {
  content: "";
  position: absolute;
  left: 10px;
  top: 5px;
  border-left: 6px solid transparent;
  border-bottom: 6px solid #333;
}
.list ul {
  margin-left: 31px;
  border-left: 1px dotted #777;
}
.list li {
  position: relative;
  display: flex;
  align-items: center;
  gap: 8px;
  width: max-content;
  height: 16px;
  margin-left: 9px;
  padding: 0 5px 0 3px;
  font: 10px/16px "DejaVu Sans Mono", monospace;
}
.list li::before {
  content: "";
  position: absolute;
  left: -9px;
  top: 8px;
  width: 9px;
  border-top: 1px dotted #777;
}
.list li svg {
  width: 11px;
  height: 11px;
}
.list .sel {
  background: #316ac5;
}
.vscroll {
  width: 16px;
  display: flex;
  flex-direction: column;
  align-items: center;
  gap: 7px;
  padding: 7px 0;
  background: #f0f0f0;
}
.track {
  flex: 1;
  width: 14px;
}
.thumb {
  height: 43%;
  border: 1px solid #979797;
  border-radius: 2px;
  background: repeating-linear-gradient(#666 0 1px, transparent 1px 3px) center / 7px 9px no-repeat, linear-gradient(90deg, #f4f4f4, #ccc);
}
.tri {
  width: 0;
  border: 4px solid transparent;
}
.tri.up {
  border-top: 0;
  border-bottom-color: #444;
}
.tri.down {
  border-bottom: 0;
  border-top-color: #444;
}
.tri.left {
  border-left: 0;
  border-right-color: #333;
}
.tri.right {
  border-right: 0;
  border-left-color: #333;
}

/* property sheet */
.props {
  flex: 1;
  display: flex;
  flex-direction: column;
  padding-top: 1px;
  background: #fff;
}
.tabs {
  display: flex;
  height: 21px;
  border-bottom: 1px solid #83838f;
}
.tab {
  width: 64px;
  height: 21px;
  padding-bottom: 2px;
  border: 1px solid #83838f;
  border-bottom: 0;
  background: #fff;
}
.sheet {
  flex: 1;
  padding: 3px 2px 3px 3px;
  border: 1px solid #83838f;
  border-top: 0;
}
.inner {
  height: 100%;
  border: 1px solid #a0a0a8;
}
table {
  table-layout: fixed;
  width: 370px;
  border-collapse: collapse;
}
.c-no {
  width: 21px;
}
.c-name {
  width: 191px;
}
.c-val {
  width: 126px;
}
.c-add {
  width: 31px;
}
th, td {
  height: 19px;
  line-height: 16px;
  border: 1px solid #b8b8b8;
  text-align: left;
}
th {
  font-weight: normal;
  text-align: center;
  background: #f4f4f4;
}
tbody th {
  font: 10px/16px "DejaVu Sans Mono", monospace;
}
thead th {
  height: 23px;
  border-top: 0;
  background: linear-gradient(#fdfdfd, #ececec);
}
th:first-child {
  border-left: 0;
}
thead .hot {
  color: #606;
  background: linear-gradient(#fadb9c, #f2c068);
}
td:nth-child(2) {
  padding-left: 20px;
}
td.blue {
  color: #00f;
}
td.val {
  padding-left: 2px;
  font: 10px/16px "DejaVu Sans Mono", monospace;
}
td.cn {
  font: 12px/16px "Noto Sans CJK SC", sans-serif;
}
td:nth-child(2).group {
  padding-left: 2px;
  color: #808080;
}
.group button {
  width: 13px;
  height: 13px;
  margin-right: 5px;
  vertical-align: -2px;
  border: 1px solid #b0b0b0;
  background: linear-gradient(#111, #111) center / 7px 1px no-repeat, linear-gradient(#111, #111) center / 1px 7px no-repeat, #f4f4f4;
}
.active th {
  color: #606;
  background: #ffd58d;
}
.active td:nth-child(2) {
  color: #fff;
  background: #39f;
}
.active td.val {
  background: #e0efff;
}
.rebar {
  display: inline-block;
  width: 10px;
  height: 11px;
  margin: 0 1px;
  vertical-align: -2px;
}
td input {
  display: block;
  appearance: none;
  width: 13px;
  height: 13px;
  margin: 0 auto;
  border: 1px solid #8e8f8f;
  background: linear-gradient(135deg, #d0d4d8, #fafafa);
  box-shadow: inset 0 0 0 1px #f4f4f4;
}
td input:checked::after {
  content: "";
  display: block;
  width: 3px;
  height: 7px;
  margin: 0 0 0 4px;
  border: solid #3a4f98;
  border-width: 0 2px 2px 0;
  transform: rotate(35deg);
}

/* status bar and task bar */
.status {
  height: 21px;
  display: flex;
  gap: 2px;
  border-bottom: 1px solid #555;
}
.status span {
  padding: 1px 2px;
  border: 1px solid #d0d0d0;
  background: linear-gradient(#fdfdfd, #efefef);
}
.s1 { width: 148px; }
.s2 { width: 78px; }
.s3 { width: 98px; }
.s4 { width: 47px; }
.s5 { flex: 1; }
.s6 { width: 70px; }
.taskbar {
  height: 8px;
  display: flex;
  gap: 2px;
  overflow: hidden;
  background: linear-gradient(90deg, #a5c0dd 85%, #8093a9 88%);
}
.start {
  width: 59px;
  padding-left: 12px;
  background: #6d8cac;
}
.task {
  width: 60px;
  padding-left: 14px;
  border: 1px solid #6f87a2;
  border-width: 0 1px;
  background: #c9d9ea;
}
.task.light {
  background: #dce7f2;
}

/* input helper */
.dialog {
  position: absolute;
  left: 872px;
  top: 394px;
  width: 494px;
  padding: 1px 2px 2px;
  border: 1px solid #444;
  border-radius: 5px 5px 0 0;
  background: linear-gradient(#bccbdc, #d7e4f2 24px);
}
.dlg-title {
  height: 23px;
  display: flex;
  align-items: center;
  justify-content: space-between;
  padding: 0 2px 0 4px;
  color: #4a5468;
}
.dlg-title button {
  width: 31px;
  height: 17px;
  display: flex;
  align-items: center;
  justify-content: center;
  border: 1px solid #8393ad;
  background: #c5d2e2;
}
.dlg-body {
  padding: 4px 7px 9px 4px;
  border: 1px solid #a0a4ac;
  border-width: 0 1px 1px 0;
  background: #f0f0f0;
}
.formula {
  display: block;
  width: 100%;
  height: 27px;
  padding-bottom: 2px;
  border: 1px solid #abadb3;
  border-color: #abadb3 #e0e4e8 #e3e9ef;
  border-radius: 2px;
  font-size: 18px;
  font-weight: bold;
  text-align: center;
  outline: 0;
}
.cols {
  display: flex;
  gap: 6px;
  padding-top: 12px;
}
.col-l {
  flex: 252;
}
.col-r {
  flex: 218;
}
.cols h2 {
  padding-bottom: 3px;
  font-size: 12px;
  font-weight: normal;
}
.col-r h2 {
  padding-left: 9px;
}
.box {
  height: 159px;
  display: flex;
  flex-direction: column;
  padding: 1px;
  border: 1px solid #a8a8a8;
  box-shadow: inset 0 0 0 1px #fff;
}
.formats ul {
  flex: 1;
}
.formats li {
  height: 17px;
  padding-left: 2px;
  font: 10px/16px "DejaVu Sans Mono", monospace;
}
.formats li i {
  font: 12px/16px "Noto Sans CJK SC", sans-serif;
}
.formats .on {
  background: #d4e3f2;
}
.box p {
  padding: 2px 1px;
  line-height: 17px;
  white-space: normal;
}
.hscroll {
  height: 17px;
  display: flex;
  align-items: center;
  gap: 8px;
  padding: 0 7px;
  border-top: 1px solid #e0e0e0;
  background: #ededed;
}
.knob {
  width: 15px;
  height: 15px;
  margin-right: auto;
  border: 1px solid #999;
  border-radius: 2px;
  background: linear-gradient(#f4f4f4, #d6d6d6);
}
.actions {
  display: flex;
  justify-content: flex-end;
  gap: 34px;
  padding: 12px 14px 0 0;
}
.actions button {
  width: 58px;
  height: 20px;
  border: 1px solid #707070;
  border-radius: 3px;
  background: linear-gradient(#f4f4f4 50%, #dcdcdc 50%);
}
.actions .ok {
  border-color: #3c7fb1;
  background: linear-gradient(#e6f4fc 50%, #bde3f8 50%);
  box-shadow: inset 0 0 0 2px #2fc4f4;
}
/* red frame drawn over the formula */
.mark {
  position: absolute;
  left: 156px;
  top: 14px;
  width: 187px;
  height: 47px;
  border: 3px solid #ff2010;
  border-radius: 3px;
  pointer-events: none;
}

/* stirrup picture */
.stirrup {
  position: absolute;
  left: 1606px;
  top: 385px;
  width: 300px;
  padding: 1px 7px 8px 8px;
  border: 1px solid #4a4f58;
  background: linear-gradient(#bccbdc, #d7e4f2 28px);
}
.st-title {
  height: 26px;
  padding-top: 7px;
  color: #4a5468;
}
.drawing {
  width: 100%;
  height: auto;
}
.cad {
  font: 18px "Liberation Serif", "Noto Sans CJK SC", serif;
}
.cad .big {
  font-size: 22px;
  font-weight: 300;
}
.ime {
  position: absolute;
  left: 1702px;
  top: 679px;
  border: 1px solid #a8b8cc;
  background: #f8fbfe;
}
```
